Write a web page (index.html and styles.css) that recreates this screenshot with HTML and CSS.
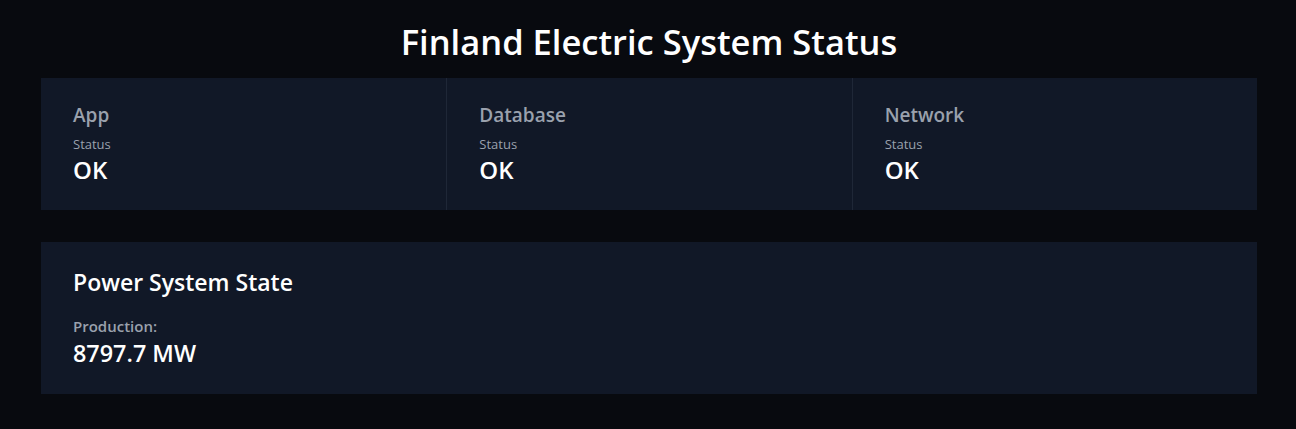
FILE: index.html
```html
<!DOCTYPE html>
<html lang="en">
<head>
<meta charset="utf-8">
<title>Finland Electric System Status</title>
<link rel="stylesheet" href="styles.css">
</head>
<body>
<main class="page">
  <h1 class="page-title">Finland Electric System Status</h1>
  <section class="stats">
    <div class="stat">
      <div class="stat-name">App</div>
      <div class="stat-label">Status</div>
      <div class="stat-value">OK</div>
    </div>
    <div class="stat">
      <div class="stat-name">Database</div>
      <div class="stat-label">Status</div>
      <div class="stat-value">OK</div>
    </div>
    <div class="stat">
      <div class="stat-name">Network</div>
      <div class="stat-label">Status</div>
      <div class="stat-value">OK</div>
    </div>
  </section>
  <section class="card">
    <h2 class="card-title">Power System State</h2>
    <div class="card-label">Production:</div>
    <div class="card-value">8797.7 MW</div>
  </section>
</main>
</body>
</html>
```
FILE: styles.css
```css
* { box-sizing: border-box; }
html, body {
  margin: 0;
  background: #080a0f;
  color: #ffffff;
  font-family: "Open Sans", "Noto Sans", sans-serif;
}
.page {
  padding: 19px 39px 0 41px;
  display: flex;
  flex-direction: column;
}
.page-title {
  margin: 0 0 13px;
  text-align: center;
  font-size: 34.5px;
  font-weight: 600;
  line-height: 46px;
}
.stats {
  display: grid;
  grid-template-columns: repeat(3, 1fr);
  background: #111827;
  height: 132px;
}
.stat {
  padding: 24px 32px 0;
  border-left: 1px solid #1f2737;
}
.stat:first-child { border-left: none; }
.stat-name {
  font-size: 19px;
  font-weight: 600;
  color: #9aa1ad;
  line-height: 26px;
}
.stat-label {
  margin-top: 7px;
  font-size: 13px;
  color: #9aa1ad;
  line-height: 18px;
}
.stat-value {
  margin-top: 2px;
  font-size: 24px;
  font-weight: 600;
  line-height: 30px;
}
.card {
  margin-top: 32px;
  background: #111827;
  height: 152px;
  padding: 25px 32px 0;
}
.card-title {
  margin: 0;
  font-size: 23px;
  font-weight: 600;
  line-height: 30px;
}
.card-label {
  margin-top: 19px;
  font-size: 15px;
  font-weight: 600;
  color: #9aa1ad;
  line-height: 20px;
}
.card-value {
  margin-top: 2px;
  font-size: 23.4px;
  font-weight: 600;
  line-height: 30px;
}
```
